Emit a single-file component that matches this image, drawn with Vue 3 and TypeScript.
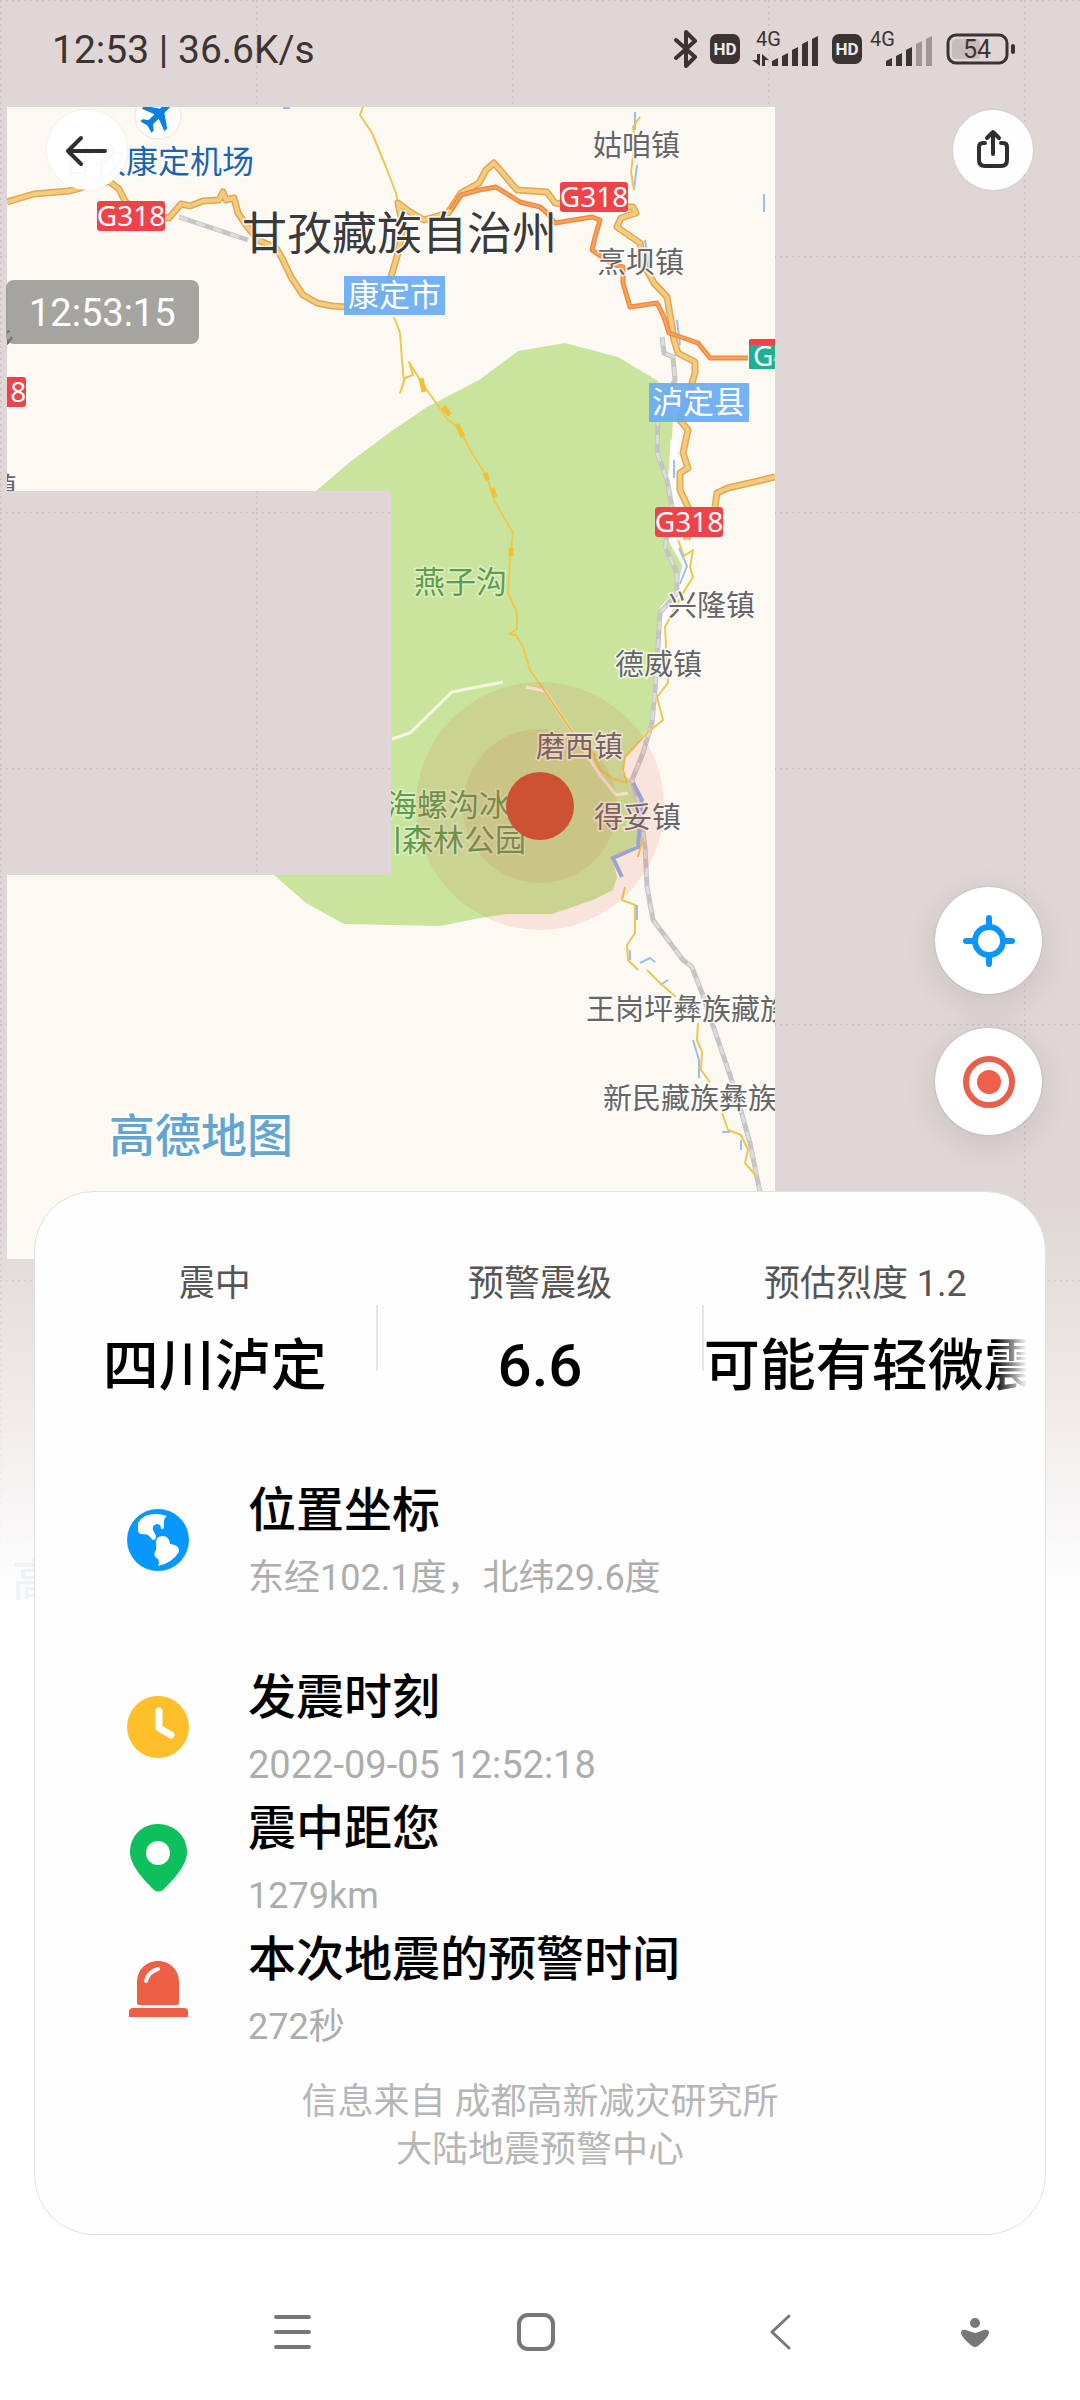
<script setup lang="ts">
interface Detail {
  icon: 'globe' | 'clock' | 'pin' | 'siren'
  title: string
  value: string
  numeric?: boolean
  spaced?: boolean
}

interface MapLabel {
  text: string
  x: number
  y: number
  kind: 'town' | 'park' | 'city' | 'airport' | 'end'
}

interface Shield {
  x: number
  y: number
}

const details: Detail[] = [
  { icon: 'globe', title: '位置坐标', value: '东经102.1度，北纬29.6度', spaced: true },
  { icon: 'clock', title: '发震时刻', value: '2022-09-05 12:52:18', numeric: true },
  { icon: 'pin', title: '震中距您', value: '1279km' },
  { icon: 'siren', title: '本次地震的预警时间', value: '272秒' },
]

const labels: MapLabel[] = [
  { text: '甘孜康定机场', x: 62, y: 173, kind: 'airport' },
  { text: '甘孜藏族自治州', x: 242, y: 250, kind: 'city' },
  { text: '姑咱镇', x: 593, y: 156, kind: 'town' },
  { text: '烹坝镇', x: 597, y: 273, kind: 'town' },
  { text: '兴隆镇', x: 668, y: 616, kind: 'town' },
  { text: '德威镇', x: 615, y: 675, kind: 'town' },
  { text: '磨西镇', x: 536, y: 757, kind: 'town' },
  { text: '得妥镇', x: 594, y: 828, kind: 'town' },
  { text: '王岗坪彝族藏族乡', x: 586, y: 1020, kind: 'town' },
  { text: '新民藏族彝族乡', x: 603, y: 1109, kind: 'town' },
  { text: '燕子沟', x: 414, y: 593, kind: 'park' },
  { text: '海螺沟冰', x: 386, y: 816, kind: 'park' },
  { text: '川森林公园', x: 371, y: 851, kind: 'park' },
  { text: '乡', x: 16, y: 350, kind: 'end' },
  { text: '镇', x: 17, y: 499, kind: 'end' },
]

const shields: Shield[] = [
  { x: 97, y: 201 },
  { x: 560, y: 182 },
  { x: 655, y: 507 },
  { x: -42, y: 377 },
]

const mainRoads: string[] = [
  'M7 202L34 194L69 191L80 188L96 182L110 182L119 189L125 201L140 215L169 218L181 204L190 206L203 201L219 200L223 192L226 200L234 198L238 213L246 225L258 240L276 248L282 258L291 277L303 295L317 303L332 306L362 308L382 297L391 277L398 253L403 227L398 203L410 212L424 220L448 213L461 193L479 183L486 170L494 163L506 177L517 190L547 192L555 203L590 207L633 207L636 213L621 218L617 227L640 243L645 267L654 283L667 297L671 320L674 340L678 353L695 362L695 373L690 390L680 420L688 430L683 453L688 468L680 473L680 490L688 507L687 540',
  'M715 507L717 493L728 488L775 477',
]

const orangeRoad =
  'M451 210L461 195L479 190L496 187L520 202L540 207L547 213L555 223L592 217L600 220L595 237L592 250L612 264L623 267L623 283L630 307L657 303L664 317L669 333L698 343L710 358L748 358'

const minorRoads: string[] = [
  'M363 107L360 115L372 133L386 167L396 193L398 203',
  'M394 317L400 333L402 360L404 382L400 393L405 378L413 375L409 362L422 383L434 400L448 420L458 427L472 453L487 477L494 500L513 533L510 560L508 593L517 613L517 629L509 634L516 635L523 647L530 670L542 687L573 733L593 753L600 770L614 779L627 783',
  'M640 117L633 127L635 142L631 172L634 190',
  'M678 540L684 556L693 550L690 567L693 577L683 593L665 627L666 647L668 683L657 697L663 720L647 733L625 757L623 770L627 783',
  'M643 837L638 857M625 887L622 900L635 905L635 933L627 945L628 960L638 970',
  'M647 970L660 983L676 997M698 1023L697 1040L702 1052L701 1070L710 1082M722 1113L728 1130L741 1135L748 1150L745 1163L757 1177',
]

const railway =
  'M179 217L248 240M662 337L664 353L673 357L675 380L658 413L657 453L667 480L672 507L665 547L677 573L677 593L660 613L658 647L655 690L652 723L643 753L632 780L640 810L645 847L647 887L653 920L683 960L692 967L702 993L719 1043L736 1093L750 1143L760 1192'

const signalTops: number[] = [28, 23, 17, 11, 6]
</script>

<template>
  <main class="screen">
    <svg class="map" viewBox="0 0 1080 1600" role="img" aria-label="震中地图">
      <defs>
        <pattern id="grid" width="256" height="256" patternUnits="userSpaceOnUse">
          <path d="M0 0H256M0 0V256" stroke="#cbc1c0" stroke-width="3" stroke-dasharray="2 4" fill="none" />
        </pattern>
        <clipPath id="tiles">
          <path d="M7 107H775V1259H7V875H391V491H7Z" />
        </clipPath>
        <linearGradient id="fade" x1="0" y1="0" x2="0" y2="1">
          <stop offset="0" stop-color="#fff" stop-opacity="0" />
          <stop offset="1" stop-color="#fff" />
        </linearGradient>
      </defs>
      <rect width="1080" height="1600" fill="#dfd6d5" />
      <rect width="1080" height="1600" fill="url(#grid)" />

      <g clip-path="url(#tiles)">
        <rect x="7" y="107" width="768" height="1152" fill="#fcf9f2" />
        <path
          d="M316 491L350 462L393 430L427 407L479 380L518 351L565 343L618 357L658 381L673 420L671 453L668 477L671 507L668 540L683 567L678 588L660 607L658 653L652 693L650 727L625 757L622 773L633 783L638 800L638 843L613 860L617 877L613 890L593 900L552 914L507 914L480 918L440 926L344 924L306 903L274 875L260 560Z"
          fill="#c9e59d"
        />
        <path d="M392 739L410 733L452 692L503 682M526 687L545 691L573 733L600 775L616 795L628 793" stroke="#f8f4e4" stroke-width="3" fill="none" />
        <path d="M674 440L672 480L674 540L687 562L680 590L664 620L662 660" stroke="#fff" stroke-width="7" fill="none" />
        <path
          d="M635 112V130M637 165L634 190M674 460V478M679 548L687 566L680 584M645 240L650 270M677 320L680 345M637 905V920M630 950V960M640 963L650 958L655 962M660 985L668 980M764 194V212M693 1040L699 1060V1078M722 1132H730M741 1140V1150M283 108H290"
          stroke="#9cc0ee" stroke-width="2" fill="none"
        />
        <path :d="railway" stroke="#c6c4c5" stroke-width="5" fill="none" />
        <path :d="railway" stroke="#dedcdb" stroke-width="3" stroke-dasharray="9 9" fill="none" />
        <path v-for="road in minorRoads" :key="road" :d="road" stroke="#edc84e" stroke-width="2" stroke-linejoin="round" fill="none" />
        <path d="M421 378L424 392M443 407L450 415M457 424L463 437M485 473L488 480M492 488L495 497M511 548V556" stroke="#efc136" stroke-width="5" fill="none" />
        <g fill="none" stroke-linejoin="round">
          <path v-for="road in mainRoads" :key="road" :d="road" stroke="#dea954" stroke-width="7" />
          <path v-for="road in mainRoads" :key="road" :d="road" stroke="#f7cb7d" stroke-width="4" />
          <path :d="orangeRoad" stroke="#f08a42" stroke-width="5" />
          <path :d="orangeRoad" stroke="#fba35c" stroke-width="2" />
        </g>
        <path d="M633 783L642 800L638 847L613 858L622 877" stroke="#93aee8" stroke-width="4" fill="none" />

        <circle cx="158" cy="116" r="23" fill="#fff" stroke="#e9e5df" />
        <g transform="translate(158 115) rotate(45)" fill="#0b80e0">
          <path d="M0-19C3-19 3-15 3-11V-6L16 3V7L3 2V10L8 14V17L0 15L-8 17V14L-3 10V2L-16 7V3L-3-6V-11C-3-15-3-19 0-19Z" />
        </g>

        <g v-for="shield in shields" :key="`${shield.x}-${shield.y}`">
          <rect :x="shield.x" :y="shield.y" width="68" height="30" rx="3" fill="#ef4349" />
          <text class="shield" :x="shield.x + 34" :y="shield.y + 25">G318</text>
        </g>
        <rect x="749" y="339" width="60" height="10" rx="2" fill="#ef4349" />
        <rect x="749" y="345" width="60" height="24" fill="#1bb192" />
        <text class="shield start" x="753" y="366">G4218</text>

        <rect x="344" y="276" width="101" height="39" fill="#68abf3" fill-opacity=".92" />
        <text class="county" x="348" y="306">康定市</text>
        <rect x="649" y="383" width="100" height="39" fill="#68abf3" fill-opacity=".92" />
        <text class="county" x="652" y="413">泸定县</text>

        <text v-for="label in labels" :key="label.text" :class="['label', label.kind]" :x="label.x" :y="label.y">{{ label.text }}</text>
        <text class="brand" x="109" y="1152">高德地图</text>
      </g>

      <circle cx="540" cy="806" r="124" fill="#e0523a" fill-opacity=".12" />
      <circle cx="540" cy="806" r="77" fill="#c8603a" fill-opacity=".12" />
      <circle cx="540" cy="806" r="34" fill="#cd5233" />
      <rect y="1200" width="1080" height="400" fill="url(#fade)" />
      <text class="brand ghost" x="12" y="1597">高德地图</text>
    </svg>

    <header class="status">
      <span class="clock">12:53 | 36.6K/s</span>
      <div class="indicators">
        <svg width="24" height="38" viewBox="0 0 24 38" fill="none" stroke="#3b3433" stroke-width="4" stroke-linejoin="round" stroke-linecap="round">
          <path d="M2 10L21 27L12 36V2L21 11L2 28" />
        </svg>
        <svg width="30" height="30" viewBox="0 0 30 30">
          <rect width="30" height="30" rx="7" fill="#3b3433" />
          <text class="hd" x="15" y="21">HD</text>
        </svg>
        <svg width="68" height="38" viewBox="0 0 68 38" fill="#3b3433">
          <text class="net" x="4" y="16">4G</text>
          <path d="M5 24H8V36L0 30H5ZM10 36H13V30H17L10 24Z" />
          <path v-for="(top, i) in signalTops" :key="top" :d="`M${20 + i * 10} 36V${top + 3}L${26 + i * 10} ${top}V36Z`" />
        </svg>
        <svg width="30" height="30" viewBox="0 0 30 30">
          <rect width="30" height="30" rx="7" fill="#3b3433" />
          <text class="hd" x="15" y="21">HD</text>
        </svg>
        <svg class="second" width="64" height="38" viewBox="0 0 64 38" fill="#3b3433">
          <text class="net" x="0" y="16">4G</text>
          <path v-for="(top, i) in signalTops" :key="top" :fill="i > 2 ? '#9f9795' : '#3b3433'" :d="`M${16 + i * 10} 36V${top + 3}L${22 + i * 10} ${top}V36Z`" />
        </svg>
        <svg width="70" height="32" viewBox="0 0 70 32">
          <rect x="6" y="6" width="28" height="20" rx="4" fill="#c5bdbb" />
          <rect x="2" y="2" width="59" height="28" rx="8" fill="none" stroke="#3b3433" stroke-width="3" />
          <rect x="65" y="11" width="4" height="10" rx="2" fill="#3b3433" />
          <text class="level" x="31" y="25">54</text>
        </svg>
      </div>
    </header>

    <div class="toolbar">
      <button class="round" type="button" aria-label="返回">
        <svg width="80" height="80" viewBox="0 0 80 80" fill="none" stroke="#2f2f2f" stroke-width="4" stroke-linecap="round" stroke-linejoin="round">
          <path d="M58 41H21M34 28L21 41L34 54" />
        </svg>
      </button>
      <button class="round" type="button" aria-label="分享">
        <svg width="80" height="80" viewBox="0 0 80 80" fill="none" stroke="#2f2f2f" stroke-width="4" stroke-linecap="round" stroke-linejoin="round">
          <path d="M40 44V23M34 28L40 22L46 28M32 33H30Q26 33 26 37V50Q26 56 32 56H48Q54 56 54 50V37Q54 33 50 33H48" />
        </svg>
      </button>
    </div>

    <time class="stamp">12:53:15</time>

    <div class="floating">
      <button class="fab" type="button" aria-label="定位">
        <svg width="54" height="54" viewBox="0 0 54 54" fill="none" stroke="#0c95fb" stroke-width="6" stroke-linecap="round">
          <circle cx="27" cy="27" r="14" />
          <path d="M27 4V12M27 42V50M4 27H12M42 27H50" />
        </svg>
      </button>
      <button class="fab" type="button" aria-label="震中">
        <svg width="54" height="54" viewBox="0 0 54 54">
          <circle cx="27" cy="27" r="23" fill="none" stroke="#e9604a" stroke-width="6" />
          <circle cx="27" cy="27" r="12" fill="#ee6049" />
        </svg>
      </button>
    </div>

    <section class="card">
      <div class="stats">
        <div class="stat">
          <span class="name">震中</span>
          <strong class="figure">四川泸定</strong>
        </div>
        <i class="divider"></i>
        <div class="stat">
          <span class="name">预警震级</span>
          <strong class="figure number">6.6</strong>
        </div>
        <i class="divider"></i>
        <div class="stat">
          <span class="name">预估烈度 1.2</span>
          <strong class="figure scrolling">可能有轻微震感</strong>
        </div>
      </div>

      <ul class="details">
        <li v-for="item in details" :key="item.title" :class="['detail', { spaced: item.spaced }]">
          <svg width="64" height="68" viewBox="0 0 64 68" aria-hidden="true">
            <g v-if="item.icon === 'globe'" transform="translate(1 3)">
              <circle cx="31" cy="31" r="31" fill="#0698ff" />
              <path
                d="M11 14Q14 9 18 7Q29 3 40 7Q36 10 37 15V18Q37 20 34 20Q34 15 30 15Q25 16 26 21L29 27Q29 31 26 31L21 26Q19 25 14 25Q11 24 11 21ZM29 33Q29 27 36 27Q42 27 43 35Q53 36 52 43Q45 54 31 57Q33 53 31 50Q26 48 28 43Q30 40 29 33Z"
                fill="#fff"
              />
            </g>
            <g v-else-if="item.icon === 'clock'" transform="translate(1 3)">
              <circle cx="31" cy="31" r="31" fill="#fdc02b" />
              <path d="M32 15V32L44 39" fill="none" stroke="#fff" stroke-width="7" stroke-linecap="round" stroke-linejoin="round" />
            </g>
            <g v-else-if="item.icon === 'pin'" transform="translate(4 0)">
              <path d="M28 0C44 0 57 12 57 28C57 42 42 57 33 66Q28 69 24 66C15 57 0 42 0 28C0 12 12 0 28 0Z" fill="#0dbf5d" />
              <circle cx="28" cy="29" r="12" fill="#fff" />
            </g>
            <g v-else transform="translate(3 6)">
              <path d="M8 42V21C8 9 17 0 29 0S50 9 50 21V42Q50 44 48 44H10Q8 44 8 42Z" fill="#ee6046" />
              <path d="M0 56V51Q0 47 4 47H55Q59 47 59 51V56Z" fill="#ee6046" />
              <path d="M17 20Q19 11 29 8" fill="none" stroke="#fff" stroke-width="4" stroke-linecap="round" />
            </g>
          </svg>
          <div class="copy">
            <h2>{{ item.title }}</h2>
            <p :class="{ numeric: item.numeric }">{{ item.value }}</p>
          </div>
        </li>
      </ul>

      <footer class="source">信息来自 成都高新减灾研究所<br />大陆地震预警中心</footer>
    </section>

    <nav class="system">
      <button type="button" aria-label="最近任务">
        <svg width="40" height="40" viewBox="0 0 40 40" stroke="#777" stroke-width="4" stroke-linecap="round">
          <path d="M4 5H37M4 20H37M4 35H37" />
        </svg>
      </button>
      <button type="button" aria-label="主屏幕">
        <svg width="40" height="40" viewBox="0 0 40 40" fill="none" stroke="#777" stroke-width="4">
          <rect x="3" y="3" width="34" height="34" rx="9" />
        </svg>
      </button>
      <button type="button" aria-label="返回上一页">
        <svg width="40" height="40" viewBox="0 0 40 40" fill="none" stroke="#777" stroke-width="3" stroke-linecap="round" stroke-linejoin="round">
          <path d="M29 4L12 20L29 36" />
        </svg>
      </button>
      <button class="last" type="button" aria-label="收起">
        <svg width="40" height="40" viewBox="0 0 40 40" fill="#777">
          <circle cx="20" cy="11" r="5" />
          <path d="M20 21Q24 20 29 18Q34 17 34 21Q33 26 23 34Q20 36 17 34Q7 26 6 21Q6 17 11 18Q16 20 20 21Z" />
        </svg>
      </button>
    </nav>
  </main>
</template>

<style>
body {
  margin: 0;
  background: #fff;
}
</style>

<style scoped>
.screen {
  position: relative;
  display: flex;
  flex-direction: column;
  min-height: 100vh;
  overflow: hidden;
  background: #fff;
  font-family: Roboto, "Noto Sans CJK SC", sans-serif;
}

.map {
  position: absolute;
  top: 0;
  left: 0;
  width: 100%;
  height: auto;
}

.label {
  font-family: "Noto Sans CJK SC", sans-serif;
  font-size: 29px;
  font-weight: 400;
  fill: #666;
  stroke: #fff;
  stroke-width: 3px;
  stroke-opacity: 0.8;
  paint-order: stroke;
}

.label.city {
  font-size: 45px;
  fill: #3a3a3a;
}

.label.airport {
  font-size: 32px;
  fill: #1a64b0;
}

.label.park {
  font-size: 31px;
  fill: #5f9b4c;
  stroke-opacity: 0.4;
}

.label.end {
  text-anchor: end;
}

.county {
  font-family: "Noto Sans CJK SC", sans-serif;
  font-size: 31px;
  fill: #fff;
}

.shield {
  font-family: "Noto Sans", sans-serif;
  font-size: 28px;
  fill: #fff;
  text-anchor: middle;
}

.shield.start {
  text-anchor: start;
}

.brand {
  font-family: "Noto Sans CJK SC", sans-serif;
  font-size: 46px;
  font-weight: 500;
  fill: #62a5d0;
  stroke: #fff;
  stroke-width: 4px;
  paint-order: stroke;
}

.brand.ghost {
  opacity: 0.1;
}

.status {
  position: relative;
  display: flex;
  align-items: center;
  justify-content: space-between;
  height: 98px;
  padding: 0 64px 0 52px;
}

.clock {
  padding-top: 2px;
  font-size: 39px;
  line-height: 48px;
  color: #3b3433;
}

.indicators {
  display: flex;
  align-items: center;
  gap: 12px;
}

.second {
  margin-left: -4px;
}

.hd {
  font-size: 17px;
  font-weight: 700;
  fill: #efe9e8;
  text-anchor: middle;
}

.net {
  font-size: 20px;
}

.level {
  font-size: 25px;
  fill: #3b3433;
  text-anchor: middle;
}

.toolbar {
  position: relative;
  display: flex;
  justify-content: space-between;
  padding: 12px 47px 0;
}

button {
  display: flex;
  align-items: center;
  justify-content: center;
  padding: 0;
  border: 0;
  background: none;
}

.round {
  width: 80px;
  height: 80px;
  border-radius: 50%;
  background: rgba(255, 255, 255, 0.97);
  box-shadow: 0 0 3px rgba(0, 0, 0, 0.08);
}

.stamp {
  position: relative;
  align-self: flex-start;
  margin: 90px 0 0 6px;
  padding: 2px 23px 0;
  border-radius: 8px;
  background: rgba(128, 128, 124, 0.7);
  color: #fff;
  font-size: 38px;
  line-height: 62px;
}

.floating {
  position: relative;
  align-self: flex-end;
  display: flex;
  flex-direction: column;
  gap: 34px;
  margin: 543px 38px 0 0;
}

.fab {
  width: 107px;
  height: 107px;
  border-radius: 50%;
  background: #fff;
  box-shadow: 0 8px 32px rgba(60, 40, 40, 0.12), 0 0 2px rgba(0, 0, 0, 0.2);
}

.card {
  position: relative;
  margin: 56px 34px 0;
  padding: 70px 18px 60px;
  border: 1px solid #e0e0e0;
  border-radius: 60px;
  background: #fefefe;
}

.stats {
  display: flex;
  align-items: center;
}

.stat {
  display: flex;
  flex: 1 1 0;
  flex-direction: column;
  align-items: center;
  gap: 24px;
  min-width: 0;
}

.divider {
  width: 2px;
  height: 66px;
  margin-top: 12px;
  background: #e6e6e6;
}

.name {
  color: #555;
  font-size: 36px;
  line-height: 44px;
}

.figure {
  color: #000;
  font-size: 56px;
  font-weight: 500;
  line-height: 72px;
  white-space: nowrap;
}

.number {
  font-size: 60px;
}

.scrolling {
  width: 100%;
  overflow: hidden;
  -webkit-mask-image: linear-gradient(to right, #000 90%, transparent);
  mask-image: linear-gradient(to right, #000 90%, transparent);
}

.details {
  margin: 72px 0 0;
  padding: 0 0 0 73px;
  list-style: none;
}

.detail {
  display: flex;
  align-items: center;
  gap: 58px;
}

.spaced {
  margin-bottom: 56px;
}

.copy {
  display: flex;
  flex-direction: column;
  gap: 3px;
}

h2 {
  margin: 0;
  color: #000;
  font-size: 48px;
  font-weight: 500;
  line-height: 74px;
}

p {
  margin: 0;
  color: #adadad;
  font-size: 36px;
  line-height: 54px;
}

.numeric {
  font-size: 38px;
}

.source {
  margin-top: 24px;
  color: #b6b6b6;
  font-size: 36px;
  line-height: 48px;
  text-align: center;
}

.system {
  position: relative;
  display: flex;
  padding: 47px 32px 17px 170px;
}

.system button {
  flex: 244 1 0;
  height: 100px;
}

.system .last {
  flex-grow: 146;
}
</style>
